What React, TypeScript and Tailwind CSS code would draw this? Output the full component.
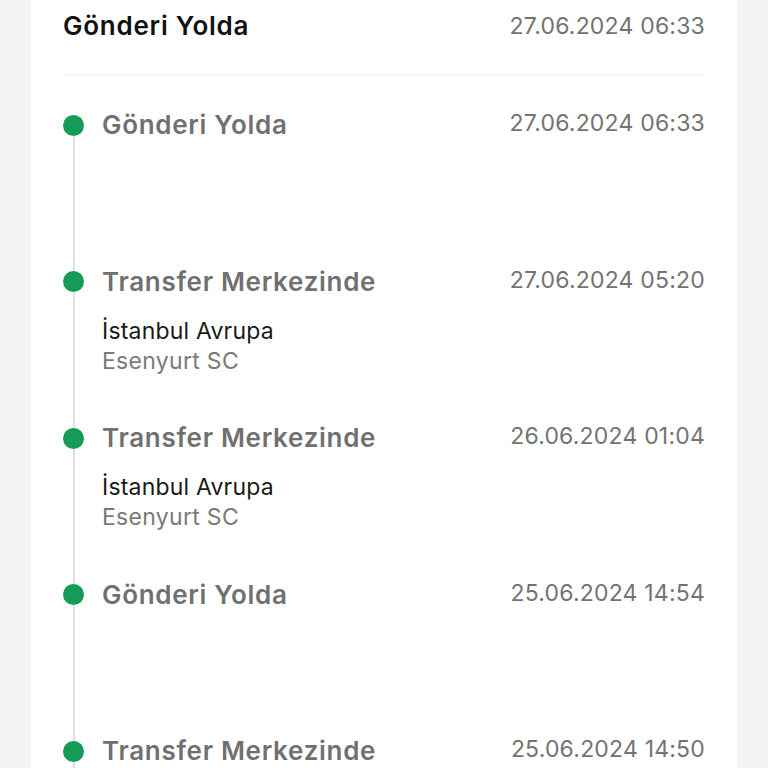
import React from "react";

type Item = { title: string; date: string; city?: string; center?: string };

const items: Item[] = [
  { title: "Gönderi Yolda", date: "27.06.2024 06:33" },
  { title: "Transfer Merkezinde", date: "27.06.2024 05:20", city: "İstanbul Avrupa", center: "Esenyurt SC" },
  { title: "Transfer Merkezinde", date: "26.06.2024 01:04", city: "İstanbul Avrupa", center: "Esenyurt SC" },
  { title: "Gönderi Yolda", date: "25.06.2024 14:54" },
  { title: "Transfer Merkezinde", date: "25.06.2024 14:50" },
];

export default function App() {
  return (
    <div
      className="h-[768px] w-[768px] overflow-hidden bg-[#f3f4f6] pl-[31px] pr-[31px]"
      style={{ fontFamily: "Inter, 'Noto Sans', sans-serif" }}
    >
      <div className="h-full bg-white px-[32px]">
        <div className="flex h-[75px] items-center justify-between border-b border-[#f3f4f6] pb-[23px]">
          <span className="text-[26px] font-semibold leading-[34px] tracking-[0.75px] text-[#111111]">
            Gönderi Yolda
          </span>
          <span className="text-[23px] leading-[30px] tracking-[0.2px] text-[#737373]">27.06.2024 06:33</span>
        </div>
        <div className="pt-[33px]">
          {items.map((it, i) => (
            <div key={i} className="flex h-[156.5px] gap-[18px]">
              <div className="flex w-[21px] shrink-0 flex-col items-center">
                <div className={"h-[6.5px] w-[2px] " + (i === 0 ? "bg-transparent" : "bg-[#e0e0e0]")} />
                <div className="h-[21px] w-[21px] rounded-full bg-[#169b57]" />
                <div className="w-[2px] flex-1 bg-[#e0e0e0]" />
              </div>
              <div className="flex-1">
                <div className="flex items-start justify-between">
                  <span className="text-[26px] font-semibold leading-[34px] tracking-[0.7px] text-[#707070]">
                    {it.title}
                  </span>
                  <span className="text-[23px] leading-[30px] tracking-[0.2px] text-[#737373]">{it.date}</span>
                </div>
                {it.city && (
                  <div className="mt-[17px]">
                    <div className="text-[23px] leading-[30px] tracking-[0.2px] text-[#1a1a1a]">{it.city}</div>
                    <div className="text-[23px] leading-[30px] tracking-[0.3px] text-[#7a7a7a]">{it.center}</div>
                  </div>
                )}
              </div>
            </div>
          ))}
        </div>
      </div>
    </div>
  );
}
